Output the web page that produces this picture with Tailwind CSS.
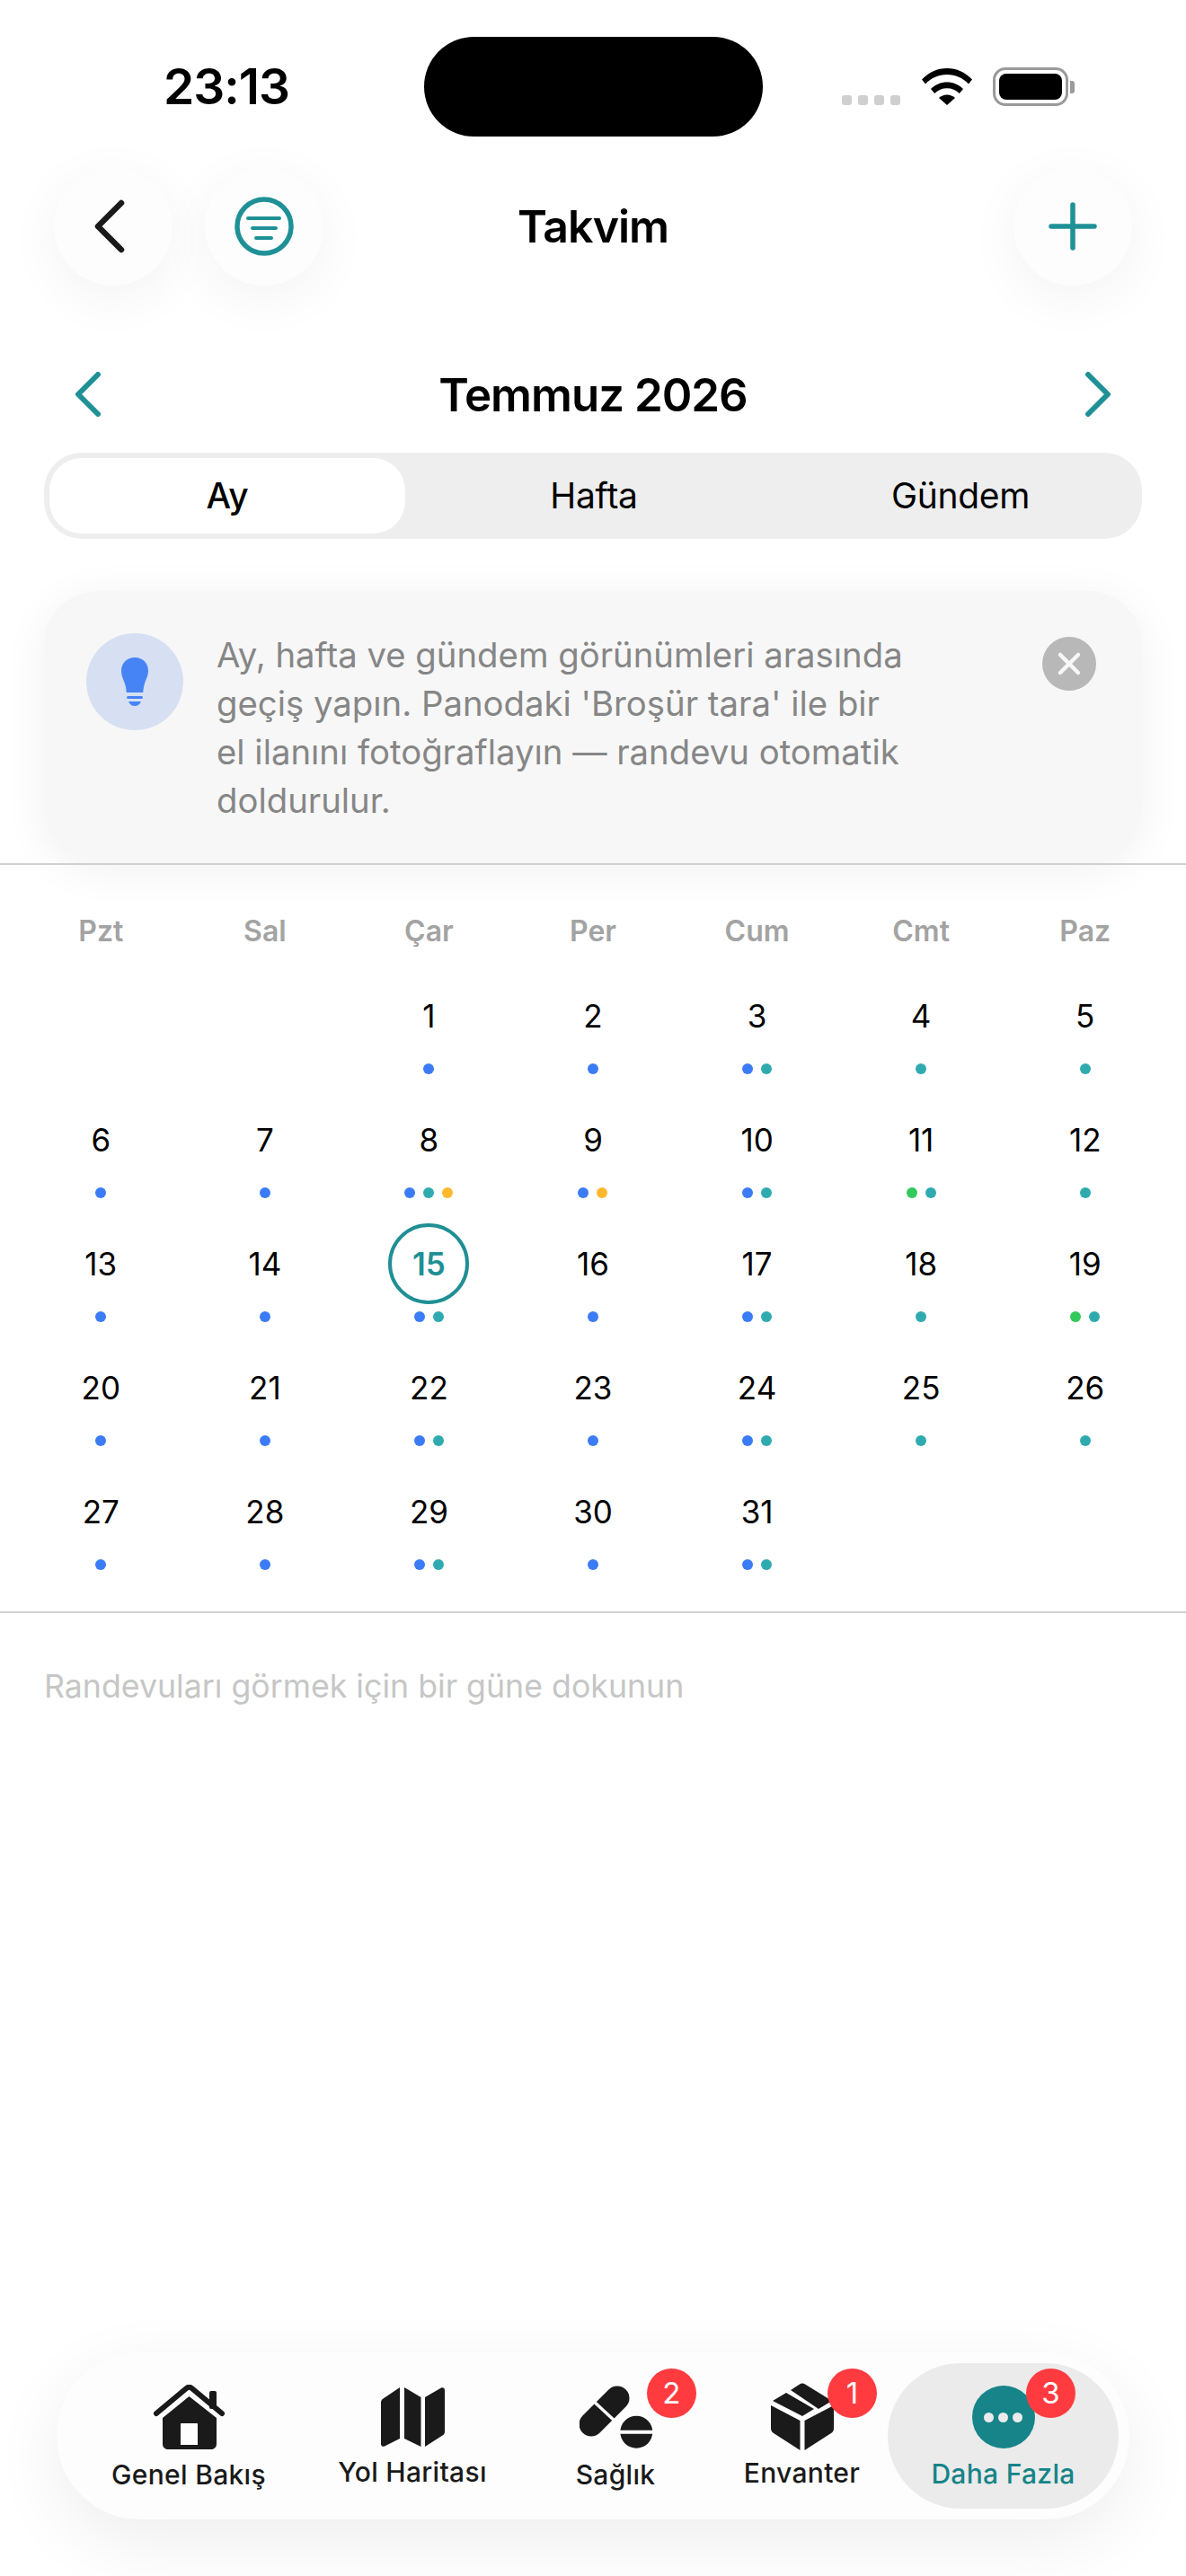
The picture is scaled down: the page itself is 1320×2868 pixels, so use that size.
<!DOCTYPE html>
<html lang="tr">
<head>
    <meta charset="UTF-8">
    <title>Takvim</title>
    <script src="https://cdn.jsdelivr.net/npm/@tailwindcss/browser@4"></script>
</head>
<body class="bg-white h-[2868px] overflow-hidden">
<div class="w-[1320px] h-[2868px] flex flex-col overflow-hidden bg-white text-black font-['Inter','Liberation_Sans',sans-serif]">

    <!-- Status bar -->
    <div class="flex items-start h-[111px] mt-[41px] shrink-0">
        <div class="w-[472px] pl-[32px] text-center text-[55px] font-semibold leading-[111px] tracking-[-1px]">23:13</div>
        <div class="w-[377px] h-[111px] rounded-[56px] bg-black shrink-0"></div>
        <div class="flex items-end ml-[88px] mt-[34px]">
            <div class="flex gap-[7px] mb-[1px]">
                <span class="w-[11px] h-[11px] rounded-[3px] bg-[#cfcfcf]"></span>
                <span class="w-[11px] h-[11px] rounded-[3px] bg-[#cfcfcf]"></span>
                <span class="w-[11px] h-[11px] rounded-[3px] bg-[#cfcfcf]"></span>
                <span class="w-[11px] h-[11px] rounded-[3px] bg-[#cfcfcf]"></span>
            </div>
            <svg class="ml-[23px] mb-[1px]" width="58" height="42" viewBox="0 0 58 42"><path d="M1 13.500C8.500 5.500 18.500 1 29 1s20.500 4.500 28 12.500l-4 5C46.500 11.500 38 8 29 8s-17.500 3.500-24 10.500z" fill="#000"/><path d="M11 24c5-5 11.200-7.600 18-7.600S42 19 47 24l-4.200 5c-3.800-3.800-8.600-5.800-13.800-5.800S19 25.200 15.200 29z" fill="#000"/><path d="M20 34c2.500-2.300 5.600-3.500 9-3.500s6.500 1.200 9 3.500l-9 8z" fill="#000"/></svg>
            <div class="flex items-center ml-[22px]">
                <div class="w-[84px] h-[43px] rounded-[14px] border-[3px] border-[#9a9a9a] p-[4px]"><div class="w-full h-full rounded-[8px] bg-black"></div></div>
                <div class="w-[5px] h-[14px] ml-[2px] rounded-r-[3px] bg-[#9a9a9a]"></div>
            </div>
        </div>
    </div>

    <!-- Header -->
    <div class="flex items-center h-[132px] mt-[34px] px-[60px] shrink-0">
        <button class="w-[132px] h-[132px] rounded-full bg-[#fdfdfd] shadow-[0_14px_60px_rgba(0,0,0,0.05)] flex items-center justify-center">
            <svg class="mr-[9px]" width="36" height="60" viewBox="0 0 36 60" fill="none"><path d="M31 4 5 30l26 26" stroke="#1a1a1a" stroke-width="6.500" stroke-linecap="round" stroke-linejoin="round"/></svg>
        </button>
        <button class="w-[132px] h-[132px] ml-[36px] rounded-full bg-[#fdfdfd] shadow-[0_14px_60px_rgba(0,0,0,0.05)] flex items-center justify-center">
            <svg width="66" height="66" viewBox="0 0 66 66" fill="none" stroke="#1f9196" stroke-linecap="round"><circle cx="33" cy="33" r="30" stroke-width="5.500"/><path d="M15 24h35M20 35h26M24 46h17" stroke-width="4"/></svg>
        </button>
        <h1 class="flex-1 text-center text-[50px] font-semibold leading-none tracking-[-1px] pr-[168px]">Takvim</h1>
        <button class="w-[132px] h-[132px] rounded-full bg-[#fdfdfd] shadow-[0_14px_60px_rgba(0,0,0,0.05)] flex items-center justify-center">
            <svg width="54" height="54" viewBox="0 0 54 54" fill="none" stroke="#1f9196" stroke-width="5.500" stroke-linecap="round"><path d="M27 3v48M3 27h48"/></svg>
        </button>
    </div>

    <!-- Month -->
    <div class="flex items-center justify-between h-[60px] mt-[91px] pl-[82px] pr-[82px] shrink-0">
        <svg width="32" height="50" viewBox="0 0 32 50" fill="none"><path d="M27 3 5 25l22 22" stroke="#1f9196" stroke-width="6" stroke-linecap="round" stroke-linejoin="round"/></svg>
        <div class="text-[51px] font-semibold leading-none tracking-[-1px]">Temmuz 2026</div>
        <svg width="32" height="50" viewBox="0 0 32 50" fill="none"><path d="m5 3 22 22L5 47" stroke="#1f9196" stroke-width="6" stroke-linecap="round" stroke-linejoin="round"/></svg>
    </div>

    <!-- View switch -->
    <div class="flex h-[96px] mt-[35px] mx-[49px] p-[6px] rounded-[42px] bg-[#eeeeee] text-[39px] font-normal tracking-[-0.3px] shrink-0">
        <div class="w-[396px] rounded-[36px] bg-white flex items-center justify-center font-medium">Ay</div>
        <div class="w-[420px] flex items-center justify-center">Hafta</div>
        <div class="flex-1 flex items-center justify-center pl-[2px]">Gündem</div>
    </div>

    <!-- Tip card -->
    <div class="flex items-start h-[302px] mt-[58px] mx-[49px] pt-[47px] pl-[47px] rounded-[60px] bg-[#f7f7f7] shadow-[0_8px_50px_rgba(0,0,0,0.06)] shrink-0">
        <div class="w-[108px] h-[108px] rounded-full bg-[#d6e0f2] flex items-center justify-center shrink-0">
            <svg width="32" height="54" viewBox="0 0 32 54"><path d="M16 0C7 0 1 6.500 1 15c0 6 3 10.500 4.500 16 .8 3 1 5 1.300 8h18.400c.3-3 .5-5 1.300-8C27.500 25.500 31 21 31 15 31 6.500 25 0 16 0z" fill="#4684f6"/><rect x="7" y="43" width="18" height="3" rx="1.500" fill="#4684f6"/><path d="M9 49h14c-1 3-4 5-7 5s-6-2-7-5z" fill="#4684f6"/></svg>
        </div>
        <p class="w-[770px] ml-[37px] mt-[-3px] text-[38.300px] leading-[54px] text-[#868686]">Ay, hafta ve gündem görünümleri arasında geçiş yapın. Panodaki 'Broşür tara' ile bir el ilanını fotoğraflayın — randevu otomatik doldurulur.</p>
        <div class="w-[60px] h-[60px] ml-[149px] mt-[4px] rounded-full bg-[#b8b8b8] flex items-center justify-center shrink-0">
            <svg width="28" height="28" viewBox="0 0 28 28" fill="none" stroke="#f7f7f7" stroke-width="4.500" stroke-linecap="round"><path d="m4 4 20 20M24 4 4 24"/></svg>
        </div>
    </div>

    <div class="h-[2px] mt-[1px] bg-[#d0d0d0] shrink-0"></div>

    <!-- Weekdays -->
    <div class="grid grid-cols-7 mx-[21px] mt-[50px] h-[40px] items-center text-center text-[32px] font-semibold text-[#a3a3a3] shrink-0">
        <div>Pzt</div><div>Sal</div><div>Çar</div><div>Per</div><div>Cum</div><div>Cmt</div><div>Paz</div>
    </div>

    <!-- Month grid -->
    <div id="grid" class="grid grid-cols-7 mx-[21px] mt-[36px] auto-rows-[138px] text-center text-[35px] shrink-0"></div>

    <div class="h-[2px] mt-[15px] bg-[#d0d0d0] shrink-0"></div>

    <p class="mt-[59px] pl-[49px] text-[35.700px] leading-[44px] text-[#c6c6c6] shrink-0">Randevuları görmek için bir güne dokunun</p>

    <!-- Tab bar -->
    <div class="relative flex mt-auto mb-[63px] mx-[63px] h-[186px] py-[12px] pl-[12px] pr-[12px] rounded-[93px] bg-[#fdfdfd] shadow-[0_24px_80px_rgba(0,0,0,0.07)] text-[30px] leading-[40px] font-medium tracking-[0.3px] shrink-0">
        <div class="w-[270px] flex flex-col items-center text-[#1a1a1a]">
            <svg class="mt-[24px]" width="81" height="72" viewBox="0 0 81 72"><path d="M4 32 37.500 4c1.800-1.500 4.200-1.500 6 0L77 32" fill="none" stroke="#1a1a1a" stroke-width="6" stroke-linecap="round" stroke-linejoin="round"/><rect x="63" y="7" width="8" height="20" rx="2" fill="#1a1a1a"/><path fill-rule="evenodd" d="M40.500 13 11 37v29c0 3.500 2.500 6 6 6h48c3.500 0 6-2.500 6-6V37zM32 43h17c.6 0 1 .4 1 1v23H31V44c0-.6.400-1 1-1z" fill="#1a1a1a"/></svg>
            <span class="mt-[8px]">Genel Bakış</span>
        </div>
        <div class="w-[228px] flex flex-col items-center text-[#1a1a1a]">
            <svg class="mt-[27px]" width="71" height="66" viewBox="0 0 71 66" fill="#1a1a1a"><path d="M21 0v57L4 65.500c-2 1-4-.2-4-2.500V17c0-2 .8-3.500 2.500-4.500z"/><path d="M26 0 44.500 11v55L26 57z"/><path d="M49 11 67 .5c2-1 4 .2 4 2.500v46c0 2-.8 3.500-2.500 4.500L49 66z"/></svg>
            <span class="mt-[8px]">Yol Haritası</span>
        </div>
        <div class="relative w-[224px] flex flex-col items-center text-[#1a1a1a]">
            <svg class="mt-[25px] ml-[2px]" width="82" height="70" viewBox="0 0 82 70"><path d="M13 43 42 14" stroke="#1a1a1a" stroke-width="27" stroke-linecap="round"/><path d="M13 15 41 41" stroke="#fdfdfd" stroke-width="3.500"/><circle cx="63.300" cy="51.700" r="18" fill="#1a1a1a"/><path d="M44 51.700h38" stroke="#fdfdfd" stroke-width="4"/></svg>
            <span class="mt-[9px]">Sağlık</span>
            <span class="absolute left-[147px] top-[6px] w-[55px] h-[55px] rounded-full bg-[#ff3b40] text-white text-[33px] font-normal leading-[55px] text-center">2</span>
        </div>
        <div class="relative w-[191px] flex flex-col items-center text-[#1a1a1a]">
            <svg class="mt-[22px]" width="70" height="75" viewBox="0 0 70 75" fill="#1a1a1a"><path d="M0 25 32.500 42v33L3 56c-2-1.300-3-3-3-5.500z"/><path d="M70 25 37.500 42v33L67 56c2-1.300 3-3 3-5.500z"/><path d="M2 20 17 11l31 18-13 8z"/><path d="m22 8 10-6.500c2-1.300 4-1.300 6 0L68 20l-15 9z"/></svg>
            <span class="mt-[5px]">Envanter</span>
            <span class="absolute left-[124px] top-[6px] w-[55px] h-[55px] rounded-full bg-[#ff3b40] text-white text-[33px] font-normal leading-[55px] text-center">1</span>
        </div>
        <div class="relative w-[257px] h-[162px] rounded-[81px] bg-[#ebebeb] flex flex-col items-center text-[#168488]">
            <div class="mt-[25px] w-[70px] h-[70px] rounded-full bg-[#168488] flex items-center justify-center gap-[5px]">
                <span class="w-[11px] h-[11px] rounded-full bg-[#ebebeb]"></span>
                <span class="w-[11px] h-[11px] rounded-full bg-[#ebebeb]"></span>
                <span class="w-[11px] h-[11px] rounded-full bg-[#ebebeb]"></span>
            </div>
            <span class="mt-[8px]">Daha Fazla</span>
            <span class="absolute left-[154px] top-[6px] w-[55px] h-[55px] rounded-full bg-[#ff3b40] text-white text-[33px] font-normal leading-[55px] text-center">3</span>
        </div>
    </div>
</div>

<script>
    // b = blue, t = teal, g = green, y = yellow
    const dots = { b: 'bg-[#3b7cf6]', t: 'bg-[#2fabb0]', g: 'bg-[#33c95c]', y: 'bg-[#fdb92e]' };
    const days = ['', '', 'b', 'b', 'bt', 't', 't',
        'b', 'b', 'bty', 'by', 'bt', 'gt', 't',
        'b', 'b', 'bt', 'b', 'bt', 't', 'gt',
        'b', 'b', 'bt', 'b', 'bt', 't', 't',
        'b', 'b', 'bt', 'b', 'bt'];
    const grid = document.getElementById('grid');
    let n = 0;
    days.forEach((d) => {
        const cell = document.createElement('div');
        cell.className = 'flex flex-col items-center';
        if (d) {
            n++;
            const today = n === 15;
            const num = today
                ? `<div class="w-[90px] h-[90px] mt-[-3px] rounded-full border-[4px] border-[#1f8f94] flex items-center justify-center font-semibold text-[#1f8f94]">${n}</div>`
                : `<div class="w-[90px] h-[90px] mt-[-3px] flex items-center justify-center">${n}</div>`;
            const row = [...d].map((c) => `<span class="w-[12px] h-[12px] rounded-full ${dots[c]}"></span>`).join('');
            cell.innerHTML = num + `<div class="flex gap-[9px] mt-[8px]">${row}</div>`;
        }
        grid.appendChild(cell);
    });
</script>
</body>
</html>
